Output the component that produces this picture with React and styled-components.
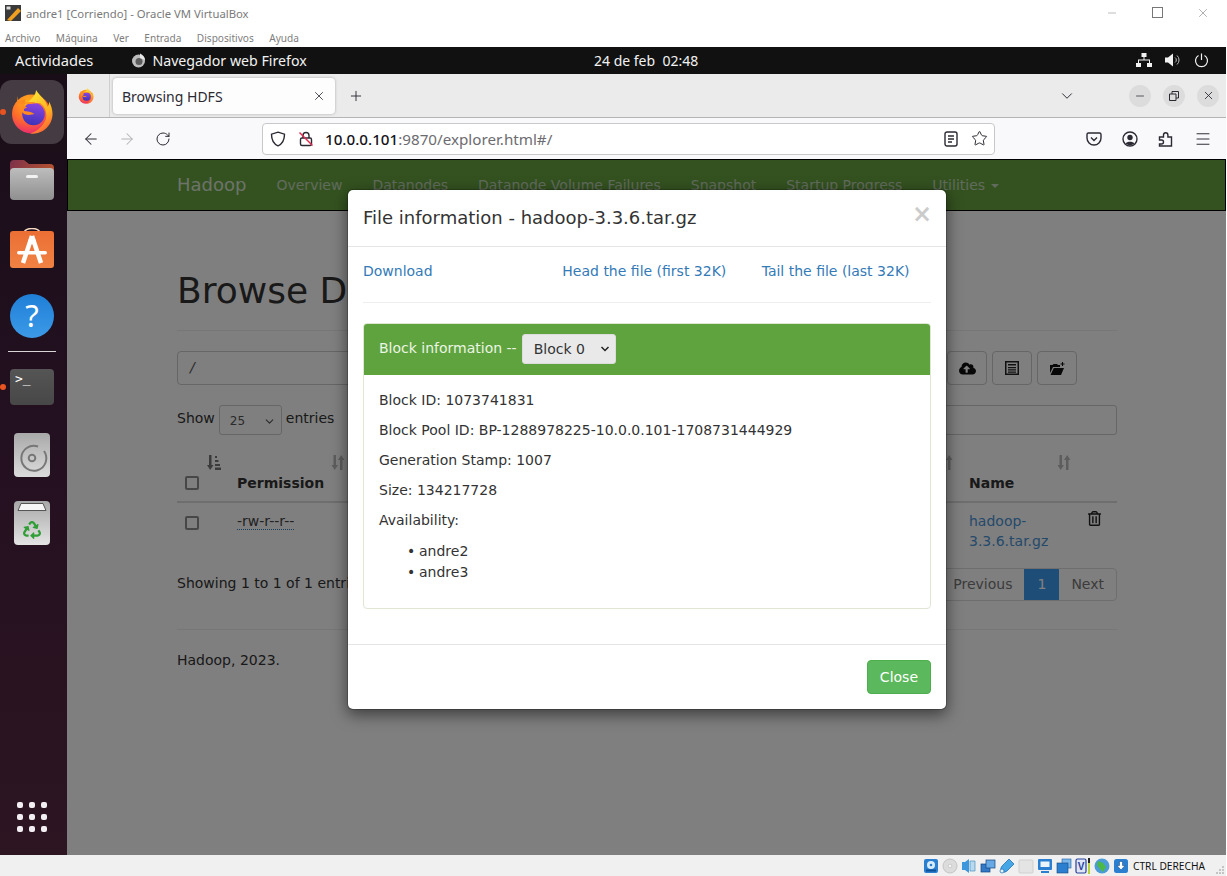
import React from "react";
import styled, { createGlobalStyle } from "styled-components";
import { FaCloudUploadAlt, FaRecycle, FaRegTrashAlt } from "react-icons/fa";
import { ArrowLeft, ArrowRight, ChevronDown, Plus, RotateCw, Star, X, Minus, Menu } from "lucide-react";

const UI_FONT = `"Noto Sans", "Open Sans", sans-serif`;
const WEB_FONT = `"DejaVu Sans", sans-serif`;

const GlobalStyle = createGlobalStyle`
  html, body {
    margin: 0;
    padding: 0;
    background: #fff;
  }
  * {
    box-sizing: border-box;
  }
`;

const Screen = styled.div`
  width: 1227px;
  height: 876px;
  display: flex;
  flex-direction: column;
  overflow: hidden;
  background: #fff;
  font-family: ${UI_FONT};
`;

/* VirtualBox window */
const TitleBar = styled.div`
  height: 25px;
  display: flex;
  align-items: center;
  padding: 0 1px 0 5px;
  gap: 5px;
  font-size: 11.3px;
  color: #7a7a7a;
`;

const TitleText = styled.span`
  padding-top: 2px;
`;

const WinButtons = styled.div`
  margin-left: auto;
  display: flex;
  align-items: center;
  color: #777;
`;

const WinButton = styled.span`
  width: 45.5px;
  display: flex;
  justify-content: center;
`;

const MenuBar = styled.div`
  height: 22px;
  display: flex;
  align-items: center;
  gap: 15.5px;
  padding: 3px 0 0 5px;
  font-size: 10.1px;
  color: #7d7d7d;
`;

const VmArea = styled.div`
  width: 1226px;
  flex: 1;
  min-height: 0;
  display: flex;
  flex-direction: column;
`;

const TopBar = styled.div`
  height: 27px;
  background: #111;
  color: #f2f2f2;
  display: grid;
  grid-template-columns: 579px auto 1fr;
  align-items: center;
  font-size: 14.2px;
  padding: 0 15px 1px;
`;

const TopLeft = styled.div`
  display: flex;
  align-items: center;
  gap: 38px;
`;

const Activities = styled.span`
  font-size: 14.7px;
`;

const AppName = styled.span`
  display: flex;
  align-items: center;
  gap: 6px;
`;

const Clock = styled.span`
  font-size: 14px;
  white-space: pre;
`;

const TopRight = styled.div`
  display: flex;
  justify-content: flex-end;
  align-items: center;
  gap: 13px;
  padding-right: 2px;
`;

const Desktop = styled.div`
  flex: 1;
  min-height: 0;
  display: flex;
`;

/* Ubuntu dock */
const Dock = styled.div`
  width: 67px;
  display: flex;
  flex-direction: column;
  align-items: stretch;
  padding-top: 4px;
  background: linear-gradient(180deg, #190e18 0%, #231020 45%, #2d1522 100%);
`;

const DockSlot = styled.div`
  position: relative;
  width: 64px;
  height: 68px;
  display: flex;
  align-items: center;
  justify-content: center;
  &::before {
    content: "";
    display: ${(p) => (p.$active ? "block" : "none")};
    position: absolute;
    inset: 2px 0;
    border-radius: 12px;
    background: #453c43;
  }
  &::after {
    content: "";
    display: ${(p) => (p.$running ? "block" : "none")};
    position: absolute;
    left: 0;
    top: 31px;
    width: 6px;
    height: 6px;
    border-radius: 50%;
    background: #e95420;
  }
  svg {
    position: relative;
    z-index: 1;
  }
`;

const DockDivider = styled.div`
  height: 1px;
  margin: 1px 11px 1px 8px;
  background: #d8d4d8;
`;

const AppGrid = styled.div`
  margin: auto 0 23px 17px;
  width: 30px;
  display: grid;
  grid-template-columns: repeat(3, 6px);
  gap: 6px;
`;

const AppDot = styled.span`
  width: 6px;
  height: 6px;
  border-radius: 2px;
  background: #f3eef2;
`;

/* Firefox */
const Browser = styled.div`
  flex: 1;
  min-width: 0;
  display: flex;
  flex-direction: column;
`;

const TabStrip = styled.div`
  height: 44px;
  display: flex;
  align-items: center;
  background: #ebebeb;
  border-bottom: 1px solid #b4b4b4;
  color: #2b2a33;
`;

const ViewButton = styled.div`
  width: 43px;
  height: 43px;
  display: flex;
  align-items: center;
  justify-content: center;
  padding-right: 4px;
  border-right: 1px solid #cfcfcf;
`;

const Tab = styled.div`
  width: 222px;
  height: 36px;
  margin-left: 3px;
  padding: 1px 9px 0;
  display: flex;
  align-items: center;
  justify-content: space-between;
  background: #fdfdfd;
  border-radius: 4px;
  box-shadow: 0 0 3px rgba(0, 0, 0, 0.28);
  font-size: 14px;
`;

const NewTab = styled.div`
  margin-left: 13px;
  display: flex;
`;

const StripRight = styled.div`
  margin-left: auto;
  display: flex;
  align-items: center;
  padding-right: 7px;
`;

const CircleButton = styled.span`
  width: 22px;
  height: 22px;
  margin-left: ${(p) => p.$gap || 12}px;
  border-radius: 50%;
  background: #dcdcdc;
  display: flex;
  align-items: center;
  justify-content: center;
`;

const NavBar = styled.div`
  height: 41px;
  display: flex;
  align-items: center;
  background: #f9f9fb;
  color: #2b2a33;
  padding-left: 6px;
`;

const NavButton = styled.span`
  width: 36px;
  display: flex;
  justify-content: center;
  color: ${(p) => (p.$off ? "#b3b3b6" : "#2b2a33")};
`;

const UrlBar = styled.div`
  width: 733px;
  height: 32px;
  margin-left: 81px;
  padding: 0 6px 0 7px;
  display: flex;
  align-items: center;
  gap: 12px;
  background: #fff;
  border: 1px solid #c8c8c8;
  border-radius: 4px;
  font-size: 15.2px;
`;

const UrlText = styled.span`
  margin-left: -1px;
  color: #6c6c70;
  b {
    font-weight: 500;
    color: #15141a;
  }
`;

const UrlIcons = styled.div`
  margin-left: auto;
  display: flex;
  align-items: center;
  gap: 13px;
`;

const NavRight = styled.div`
  margin-left: 91px;
  display: flex;
  align-items: center;
  gap: 20px;
`;

/* Hadoop page */
const Page = styled.div`
  position: relative;
  flex: 1;
  min-height: 0;
  background: #fff;
  color: #333;
  font-family: ${WEB_FONT};
  font-size: 14px;
  line-height: 20px;
  overflow: hidden;
`;

const HadoopNav = styled.div`
  height: 52px;
  padding-left: 109px;
  display: flex;
  align-items: center;
  gap: 30px;
  background: #68a541;
  border: 1px solid #000;
  color: #c3d6ba;
  white-space: nowrap;
`;

const Brand = styled.span`
  font-size: 18px;
  color: #dbe6d5;
`;

const Caret = styled.span`
  display: inline-block;
  margin-left: 6px;
  vertical-align: middle;
  border-top: 4px solid currentColor;
  border-left: 4px solid transparent;
  border-right: 4px solid transparent;
`;

const Container = styled.div`
  width: 940px;
  margin-left: 110px;
`;

const PageHeader = styled.div`
  margin-top: 60px;
  padding-bottom: 19px;
  border-bottom: 1px solid #eee;
`;

const Heading = styled.h1`
  margin: 0;
  font-size: 36px;
  font-weight: 500;
  line-height: 40px;
  color: #333;
`;

const PathRow = styled.div`
  margin-top: 20px;
  padding-right: 40px;
  display: flex;
  gap: 5px;
`;

const PathInput = styled.div`
  flex: 1;
  height: 34px;
  padding: 5px 12px 7px;
  border: 1px solid #ccc;
  border-radius: 4px;
  color: #555;
  font-style: italic;
`;

const IconButton = styled.span`
  width: 40px;
  height: 34px;
  display: flex;
  align-items: center;
  justify-content: center;
  border: 1px solid #ccc;
  border-radius: 4px;
  color: #111;
`;

const FilterRow = styled.div`
  margin-top: 20px;
  display: flex;
  align-items: center;
  justify-content: space-between;
`;

const ShowEntries = styled.div`
  display: flex;
  align-items: center;
  gap: 4px;
`;

const EntriesLabel = styled.span`
  margin-bottom: 4px;
`;

const EntriesSelect = styled.span`
  width: 63px;
  height: 30px;
  padding: 2px 5px 0 10px;
  display: flex;
  align-items: center;
  justify-content: space-between;
  border: 1px solid #ccc;
  border-radius: 3px;
  font-size: 12px;
  color: #555;
`;

const SearchBox = styled.div`
  width: 240px;
  height: 30px;
  border: 1px solid #ccc;
  border-radius: 3px;
`;

const Table = styled.div`
  margin-top: 10px;
  display: grid;
  grid-template-columns: 52px 124px repeat(5, 100px) 108px 118px 38px;
  font-size: 14px;
`;

const HeadCell = styled.div`
  height: 58px;
  padding: 0 8px 8px;
  display: flex;
  flex-direction: column;
  justify-content: flex-end;
  gap: 3px;
  border-bottom: 2px solid #ddd;
  font-weight: 700;
  svg {
    align-self: flex-end;
  }
`;

const HeadLabel = styled.span`
  height: 20px;
`;

const CheckBox = styled.span`
  display: block;
  width: 14px;
  height: 14px;
  margin: ${(p) => (p.$head ? "3px 0 3px 0" : "5px 0 0 0")};
  border: 2px solid #8f8f8f;
  border-radius: 2px;
  background: #fff;
`;

const BodyCell = styled.div`
  padding: 8px;
  height: 56px;
`;

const DottedLink = styled.span`
  color: #444;
  border-bottom: 1px dotted #337ab7;
`;

const FileLink = styled.span`
  color: #4b93d6;
`;

const TableFoot = styled.div`
  margin-top: 9px;
  display: flex;
  align-items: center;
  justify-content: space-between;
`;

const FootInfo = styled.span`
  margin-bottom: 3px;
`;

const Pagination = styled.div`
  display: flex;
  height: 33px;
  border: 1px solid #ddd;
  border-radius: 4px;
  overflow: hidden;
`;

const PageLink = styled.span`
  display: flex;
  align-items: center;
  padding: 0 ${(p) => (p.$current ? 13 : 12)}px 1px;
  background: ${(p) => (p.$current ? "#3c9cf0" : "transparent")};
  color: ${(p) => (p.$current ? "#fff" : "#777")};
`;

const Divider = styled.hr`
  margin: 28px 0 20px;
  border: 0;
  border-top: 1px solid #eee;
`;

/* Modal */
const Backdrop = styled.div`
  position: absolute;
  inset: 0;
  background: rgba(0, 0, 0, 0.5);
  display: flex;
  justify-content: center;
  padding: 30px 0 0 1px;
`;

const Dialog = styled.div`
  width: 600px;
  height: 521px;
  background: #fff;
  border: 1px solid rgba(0, 0, 0, 0.2);
  background-clip: padding-box;
  border-radius: 6px;
  box-shadow: 0 5px 15px rgba(0, 0, 0, 0.5);
`;

const DialogHead = styled.div`
  height: 57px;
  padding: 15px;
  display: flex;
  justify-content: space-between;
  border-bottom: 1px solid #e5e5e5;
`;

const DialogTitle = styled.div`
  font-size: 18px;
  line-height: 26px;
  color: #333;
`;

const CloseMark = styled.span`
  font-size: 24px;
  font-weight: 700;
  line-height: 18px;
  color: #000;
  opacity: 0.2;
  margin-right: -1px;
`;

const DialogBody = styled.div`
  padding: 14px 15px 15px;
`;

const LinkRow = styled.div`
  margin: 0 -15px;
  display: grid;
  grid-template-columns: repeat(3, 1fr);
`;

const ModalLink = styled.span`
  padding: 0 15px;
  color: #337ab7;
`;

const Rule = styled.hr`
  margin: 21px 0 20px;
  border: 0;
  border-top: 1px solid #eee;
`;

const Panel = styled.div`
  margin: 20px 0;
  border: 1px solid #dfe6d4;
  border-radius: 4px;
  overflow: hidden;
`;

const PanelHead = styled.div`
  height: 51px;
  padding: 9px 15px 11px;
  display: flex;
  align-items: center;
  gap: 5px;
  background: #5fa33e;
  color: #ebf5e4;
`;

const PanelLabel = styled.span`
  margin-bottom: 2px;
`;

const BlockSelect = styled.select`
  width: 94px;
  height: 30px;
  padding: 0 6px 0 11px;
  border: 1px solid #dcdcdc;
  border-radius: 3px;
  appearance: none;
  background-color: #e9e9e9;
  background-image: url("data:image/svg+xml,%3Csvg xmlns='http://www.w3.org/2000/svg' width='10' height='6' viewBox='0 0 10 6'%3E%3Cpath d='M1.500 1l3.500 3.500L8.500 1' fill='none' stroke='%23222' stroke-width='1.500'/%3E%3C/svg%3E");
  background-repeat: no-repeat;
  background-position: right 5px center;
  color: #333;
  font-family: ${WEB_FONT};
  font-size: 14px;
`;

const PanelBody = styled.div`
  padding: 15px;
  height: 233px;
  p {
    margin: 0 0 10px;
  }
`;

const HostList = styled.ul`
  margin: 0;
  padding: 1px 0 0 40px;
  list-style: none;
  li {
    line-height: 21px;
  }
  li::before {
    content: "•";
    display: inline-block;
    width: 12px;
    margin-left: -12px;
  }
`;

const DialogFoot = styled.div`
  padding: 15px;
  display: flex;
  justify-content: flex-end;
  border-top: 1px solid #e5e5e5;
`;

const CloseButton = styled.span`
  height: 34px;
  padding: 6px 12px;
  border: 1px solid #4cae4c;
  border-radius: 4px;
  background: #5cb85c;
  color: #fff;
`;

/* VirtualBox status bar */
const StatusBar = styled.div`
  height: 21px;
  display: flex;
  align-items: center;
  justify-content: flex-end;
  gap: 3px;
  padding-right: 1px;
  background: #f0f0f0;
  font-size: 10.2px;
  color: #111;
`;

const HostKey = styled.span`
  margin-left: 1px;
  white-space: nowrap;
`;

const Grip = styled.svg`
  margin: 8px 0 0 7px;
`;

/* Drawn icons */
const FirefoxLogo = ({ size = 44, id = "ff" }) => (
  <svg width={size} height={size} viewBox="0 0 44 44">
    <defs>
      <radialGradient id={`${id}-body`} cx="0.42" cy="0.2" r="0.95">
        <stop offset="0" stopColor="#ffb21a" />
        <stop offset="0.5" stopColor="#ff6a2b" />
        <stop offset="1" stopColor="#e3118c" />
      </radialGradient>
      <linearGradient id={`${id}-flame`} x1="0.3" y1="0" x2="0.7" y2="1">
        <stop offset="0" stopColor="#ffe234" />
        <stop offset="0.6" stopColor="#ffb020" />
        <stop offset="1" stopColor="#ff5a3a" />
      </linearGradient>
      <linearGradient id={`${id}-globe`} x1="0.6" y1="0" x2="0.4" y2="1">
        <stop offset="0" stopColor="#8f45e0" />
        <stop offset="1" stopColor="#3a33b8" />
      </linearGradient>
    </defs>
    <circle cx="21.5" cy="24" r="19.5" fill={`url(#${id}-body)`} />
    <path
      d="M26 0C26 6 20 9 18 13L30 13C37 18 38 27 34 33C31 38 26 42 20 43.5C33 45 43 35 42.5 23C42.3 19 41 15 39 11.5C39.2 14 38.6 15.8 37.4 16.5C36 10 30 6 26 0Z"
      fill={`url(#${id}-flame)`}
    />
    <circle cx="23.5" cy="24" r="11.3" fill={`url(#${id}-globe)`} />
    <path
      d="M7 6C6.7 9 7.3 11 8.5 13C10.5 10.5 13 9 15.7 9.2C14.6 10.6 14.6 12.2 16 13.2C19 15 24 13 27 13.6C22 10.5 16.5 12 13 15C10.6 17.8 11 21.5 13.5 23.5C17 26 22 24.5 24.5 24C21 21.5 17 21.6 14.5 21C13 19.6 14.5 18 17 18C15.5 16 12 14.5 9.8 14C8.2 11.5 7.5 9 7 6Z"
      fill="#ff8a1e"
    />
  </svg>
);

const FolderIcon = () => (
  <svg width="44" height="40" viewBox="0 0 44 40">
    <defs>
      <linearGradient id="folder-tab" x1="0" y1="0" x2="1" y2="0.3">
        <stop offset="0" stopColor="#7c2f4b" />
        <stop offset="1" stopColor="#b5532f" />
      </linearGradient>
      <linearGradient id="folder-body" x1="0" y1="0" x2="0" y2="1">
        <stop offset="0" stopColor="#bdbdbd" />
        <stop offset="1" stopColor="#8f8f8f" />
      </linearGradient>
    </defs>
    <path d="M0 4a4 4 0 0 1 4-4h10l5 4h21a4 4 0 0 1 4 4v14H0z" fill="url(#folder-tab)" />
    <rect y="8" width="44" height="32" rx="4" fill="url(#folder-body)" />
    <rect x="16" y="15" width="12" height="3" rx="1.5" fill="#f2f2f2" />
  </svg>
);

const StoreIcon = () => (
  <svg width="44" height="40" viewBox="0 0 44 40">
    <defs>
      <linearGradient id="store-bg" x1="0" y1="0" x2="0" y2="1">
        <stop offset="0" stopColor="#ec6f34" />
        <stop offset="1" stopColor="#f08243" />
      </linearGradient>
    </defs>
    <path d="M14 5C15 -1 29 -1 30 5" fill="none" stroke="#f6d9c2" strokeWidth="1.5" />
    <rect y="3" width="44" height="37" rx="3" fill="url(#store-bg)" />
    <path d="M22 8L13 35M22 8L31 35M18 14H26" stroke="#fff" strokeWidth="4.500" fill="none" />
    <rect x="7" y="23" width="30" height="3.500" rx="1.700" fill="#fff" />
  </svg>
);

const HelpIcon = () => (
  <svg width="44" height="44" viewBox="0 0 44 44">
    <defs>
      <linearGradient id="help-bg" x1="0" y1="0" x2="0" y2="1">
        <stop offset="0" stopColor="#1f7fd6" />
        <stop offset="1" stopColor="#3c9ae8" />
      </linearGradient>
    </defs>
    <circle cx="22" cy="22" r="22" fill="url(#help-bg)" />
    <text x="22" y="33" textAnchor="middle" fontFamily="Noto Sans, sans-serif" fontSize="31" fill="#fff">?</text>
  </svg>
);

const TerminalIcon = () => (
  <svg width="44" height="36" viewBox="0 0 44 36">
    <defs>
      <linearGradient id="term-bg" x1="0" y1="0" x2="0" y2="1">
        <stop offset="0" stopColor="#555" />
        <stop offset="1" stopColor="#474747" />
      </linearGradient>
    </defs>
    <rect width="44" height="36" rx="4" fill="url(#term-bg)" />
    <text x="5" y="14" fontFamily="DejaVu Sans Mono, monospace" fontSize="13" fill="#fff">&gt;_</text>
  </svg>
);

const DiscIcon = () => (
  <svg width="36" height="44" viewBox="0 0 36 44">
    <defs>
      <linearGradient id="disc-bg" x1="0" y1="0" x2="0" y2="1">
        <stop offset="0" stopColor="#a9a9a9" />
        <stop offset="1" stopColor="#dcdcdc" />
      </linearGradient>
    </defs>
    <rect width="36" height="44" rx="4" fill="url(#disc-bg)" />
    <path d="M30 18A12.500 12.500 0 1 1 24 13.500" fill="none" stroke="#777" strokeWidth="2" />
    <circle cx="18" cy="25" r="3.300" fill="none" stroke="#777" strokeWidth="2" />
  </svg>
);

const TrashTile = () => (
  <svg width="36" height="44" viewBox="0 0 36 44">
    <defs>
      <linearGradient id="trash-bg" x1="0" y1="0" x2="0" y2="1">
        <stop offset="0" stopColor="#a8a8a8" />
        <stop offset="1" stopColor="#e4e4e4" />
      </linearGradient>
    </defs>
    <rect width="36" height="44" rx="4" fill="url(#trash-bg)" />
    <path d="M7 2.500H29L32 9.500H4z" fill="#f7f7f7" stroke="#555" strokeWidth="1" />
    <FaRecycle x="9" y="20" size="18" color="#2f9e36" />
  </svg>
);

const NetworkIcon = () => (
  <svg width="16" height="14" viewBox="0 0 16 14" fill="#f2f2f2">
    <rect x="5.500" y="0" width="5" height="4" />
    <rect x="0" y="10" width="5" height="4" />
    <rect x="11" y="10" width="5" height="4" />
    <path d="M7.500 4h1v2.500h5.500V10h-1V7.500H3V10H2V6.500h5.500z" />
  </svg>
);

const VolumeIcon = () => (
  <svg width="16" height="14" viewBox="0 0 16 14">
    <path d="M0 4.500h3L8 0.500v13L3 9.500H0z" fill="#f2f2f2" />
    <path d="M10 4.500a3 3 0 0 1 0 5M12 2.500a6 6 0 0 1 0 9" fill="none" stroke="#bbb" strokeWidth="1" />
  </svg>
);

const PowerIcon = () => (
  <svg width="15" height="15" viewBox="0 0 15 15" fill="none" stroke="#f2f2f2" strokeWidth="1.200">
    <path d="M4.500 2.500a6 6 0 1 0 6 0M7.500 0.500v6.500" />
  </svg>
);

const ShieldIcon = () => (
  <svg width="16" height="16" viewBox="0 0 16 16" fill="none" stroke="#2b2a33" strokeWidth="1.400">
    <path d="M8 1.200L14.500 3.200C14.500 9 12.500 12.800 8 14.800C3.500 12.800 1.500 9 1.500 3.200z" />
  </svg>
);

const BrokenLockIcon = () => (
  <svg width="16" height="16" viewBox="0 0 16 16" fill="none" stroke="#2b2a33" strokeWidth="1.400">
    <path d="M5 7V4.500a3 3 0 0 1 6 0V7" />
    <rect x="2.500" y="7" width="11" height="7.500" rx="1.500" />
    <path d="M1.500 1.500L14.500 14.500" stroke="#e22850" />
  </svg>
);

const ReaderIcon = () => (
  <svg width="14" height="16" viewBox="0 0 14 16" fill="none" stroke="#2b2a33" strokeWidth="1.400">
    <rect x="1" y="1" width="12" height="14" rx="2" />
    <path d="M4 5h6M4 8h6M4 11h4" />
  </svg>
);

const PocketIcon = () => (
  <svg width="16" height="16" viewBox="0 0 16 16" fill="none" stroke="#2b2a33" strokeWidth="1.400">
    <path d="M2.500 2h11A1.500 1.500 0 0 1 15 3.500V7A7 7 0 0 1 1 7V3.500A1.500 1.500 0 0 1 2.500 2z" />
    <path d="M5 6.500l3 3 3-3" />
  </svg>
);

const AccountIcon = () => (
  <svg width="16" height="16" viewBox="0 0 16 16">
    <circle cx="8" cy="8" r="7" fill="none" stroke="#2b2a33" strokeWidth="1.400" />
    <circle cx="8" cy="6.500" r="2.700" fill="#2b2a33" />
    <path d="M3.500 12.500C5 10 11 10 12.500 12.500A7 7 0 0 1 3.500 12.500z" fill="#2b2a33" />
  </svg>
);

const ExtensionIcon = () => (
  <svg width="16" height="16" viewBox="0 0 16 16" fill="none" stroke="#2b2a33" strokeWidth="1.400">
    <path d="M1.500 6H5.500V4a2.200 2.200 0 0 1 4.400 0V6H13.500V15H1.500V13H3.500a2 2 0 0 0 0-4H1.500z" />
  </svg>
);

const SortBoth = () => (
  <svg width="14" height="15" viewBox="0 0 14 15" fill="#bbb">
    <path d="M2.500 0h2.500v10h2L3.700 15 0.500 10h2zM9 15h2.500V5h2L10.200 0 7 5h2z" />
  </svg>
);

const SortAsc = () => (
  <svg width="14" height="15" viewBox="0 0 14 15" fill="#777">
    <path d="M2 0h2.500v10h2L3.200 15 0 10h2zM8 1h2v2H8zM8 5h3.500v2H8zM8 9h5v2H8zM8 12.500h6V15H8z" />
  </svg>
);

const ListAltIcon = () => (
  <svg width="14" height="14" viewBox="0 0 14 14" fill="#222">
    <path d="M0 0h14v14H0zM1.500 1.500v11h11v-11z" fillRule="evenodd" />
    <path d="M3 3h8v1.500H3zM3 6h8v1.200H3zM3 8.300h8v1.200H3zM3 10.500h8v1.200H3z" />
  </svg>
);

const FolderPlusIcon = () => (
  <svg width="15" height="13" viewBox="0 0 15 13" fill="#111">
    <path d="M0 3h2.500l1 -1H7l1 1h2v2H3L0 11z" />
    <path d="M3.800 6H14L11 13H0.500z" />
    <path d="M12 0h1v1.500h1.500v1H13V4h-1V2.500h-1.500v-1H12z" />
  </svg>
);

/* Small status bar icons, one after the other as in the tray */
const TrayIcon = ({ children }) => (
  <svg width="16" height="16" viewBox="0 0 16 16">{children}</svg>
);

const trayIcons = [
  <>
    <rect x="1" y="1" width="14" height="14" rx="2" fill="#2a7fd0" />
    <circle cx="8" cy="7" r="4" fill="#d8ecfb" />
    <circle cx="8" cy="7" r="1.300" fill="#2a7fd0" />
    <rect x="3" y="11.500" width="10" height="2" fill="#0d4f93" />
  </>,
  <>
    <circle cx="8" cy="8" r="7" fill="#dcdcdc" stroke="#c4c4c4" />
    <circle cx="8" cy="8" r="1.800" fill="#f6f6f6" stroke="#bbb" strokeWidth="0.600" />
  </>,
  <>
    <path d="M1 4h3l4-3v14l-4-3H1z" fill="#3c97dc" />
    <path d="M9 3h5v10H9z" fill="#b9d9ef" stroke="#4d8fbe" strokeWidth="0.700" />
  </>,
  <>
    <rect x="1" y="6" width="9" height="8" fill="#3279c8" stroke="#12457f" strokeWidth="0.700" />
    <rect x="6" y="2" width="9" height="8" fill="#67a9e4" stroke="#12457f" strokeWidth="0.700" />
  </>,
  <>
    <path d="M10 1l5 5-7 7a3 3 0 0 1-5 -5z" fill="#47a6e6" stroke="#1668b0" strokeWidth="0.700" />
    <circle cx="3" cy="13" r="2" fill="#e8f3fb" stroke="#1668b0" strokeWidth="0.700" />
  </>,
  <rect x="1" y="2" width="14" height="13" rx="1" fill="#e4e4e4" stroke="#cfcfcf" />,
  <>
    <rect x="1" y="1" width="14" height="11" rx="1" fill="#2a7fd0" />
    <rect x="3.500" y="3.500" width="9" height="5.500" fill="#eaf4fc" />
    <rect x="4" y="13" width="8" height="2" fill="#2a7fd0" />
  </>,
  <>
    <rect x="6" y="1" width="9" height="9" fill="#7bb6ea" stroke="#1a5fa6" strokeWidth="0.600" />
    <rect x="1" y="5" width="11" height="10" fill="#2a7fd0" stroke="#12457f" strokeWidth="0.600" />
  </>,
  <>
    <rect x="1" y="1" width="10" height="14" rx="1.500" fill="#dfe6f5" stroke="#27409b" strokeWidth="1.200" />
    <text x="6" y="12" textAnchor="middle" fontFamily="Liberation Sans, sans-serif" fontWeight="700" fontSize="10" fill="#27409b">V</text>
    <rect x="13" y="0" width="2" height="16" fill="#222" />
    <rect x="13" y="5" width="2" height="11" fill="#b5d334" />
  </>,
  <>
    <circle cx="8" cy="8" r="7.500" fill="#4a9bd8" />
    <path d="M4 3l5 2 3 4-3 5-3-3-3-4z" fill="#4cb848" />
  </>,
  <>
    <rect x="1" y="1" width="14" height="14" rx="2.500" fill="#2a7fd0" />
    <path d="M6.500 3.500h3v4H12L8 12 4 7.500h2.500z" fill="#fff" stroke="#0d3f7a" strokeWidth="0.500" />
  </>,
];

const App = () => (
  <Screen>
    <GlobalStyle />
    <TitleBar>
      <svg width="16" height="16" viewBox="0 0 16 16">
        <rect width="16" height="16" fill="#3a3a3a" />
        <rect x="1.500" y="1.500" width="4" height="3" fill="#dcdcdc" />
        <path d="M2 15L13 3l3 3L6 16z" fill="#f0a020" />
      </svg>
      <TitleText>andre1 [Corriendo] - Oracle VM VirtualBox</TitleText>
      <WinButtons>
        <WinButton><Minus size={12} strokeWidth={1} /></WinButton>
        <WinButton>
          <svg width="11" height="11" viewBox="0 0 11 11" fill="none" stroke="#777"><rect x="0.500" y="0.500" width="10" height="10" /></svg>
        </WinButton>
        <WinButton><X size={14} strokeWidth={1} /></WinButton>
      </WinButtons>
    </TitleBar>
    <MenuBar>
      <span>Archivo</span>
      <span>Máquina</span>
      <span>Ver</span>
      <span>Entrada</span>
      <span>Dispositivos</span>
      <span>Ayuda</span>
    </MenuBar>
    <VmArea>
      <TopBar>
        <TopLeft>
          <Activities>Actividades</Activities>
          <AppName>
            <svg width="15" height="15" viewBox="0 0 15 15">
              <circle cx="7.500" cy="8" r="6.500" fill="#bdbdbd" />
              <circle cx="8" cy="8.500" r="3.500" fill="#5c5c5c" />
              <path d="M9 0.500C12 2 14 4 14 7L9 5z" fill="#e8e8e8" />
            </svg>
            Navegador web Firefox
          </AppName>
        </TopLeft>
        <Clock>24 de feb  02:48</Clock>
        <TopRight>
          <NetworkIcon />
          <VolumeIcon />
          <PowerIcon />
        </TopRight>
      </TopBar>
      <Desktop>
        <Dock>
          <DockSlot $active $running><FirefoxLogo id="dock-ff" /></DockSlot>
          <DockSlot><FolderIcon /></DockSlot>
          <DockSlot><StoreIcon /></DockSlot>
          <DockSlot><HelpIcon /></DockSlot>
          <DockDivider />
          <DockSlot $running><TerminalIcon /></DockSlot>
          <DockSlot><DiscIcon /></DockSlot>
          <DockSlot><TrashTile /></DockSlot>
          <AppGrid>
            {Array.from({ length: 9 }, (_, i) => <AppDot key={i} />)}
          </AppGrid>
        </Dock>
        <Browser>
          <TabStrip>
            <ViewButton><FirefoxLogo size={16} id="tab-ff" /></ViewButton>
            <Tab>
              Browsing HDFS
              <X size={14} strokeWidth={1.4} />
            </Tab>
            <NewTab><Plus size={16} strokeWidth={1.4} /></NewTab>
            <StripRight>
              <ChevronDown size={18} strokeWidth={1.3} />
              <CircleButton $gap={53}><Minus size={12} strokeWidth={1.5} /></CircleButton>
              <CircleButton>
                <svg width="10" height="10" viewBox="0 0 10 10" fill="none" stroke="#2b2a33"><path d="M0.500 3h6.500v6.500H0.500zM3 3V0.500h6.500V7H7" /></svg>
              </CircleButton>
              <CircleButton><X size={13} strokeWidth={1.6} /></CircleButton>
            </StripRight>
          </TabStrip>
          <NavBar>
            <NavButton><ArrowLeft size={18} strokeWidth={1.4} /></NavButton>
            <NavButton $off><ArrowRight size={18} strokeWidth={1.4} /></NavButton>
            <NavButton><RotateCw size={16} strokeWidth={1.5} /></NavButton>
            <UrlBar>
              <ShieldIcon />
              <BrokenLockIcon />
              <UrlText><b>10.0.0.101</b>:9870/explorer.html#/</UrlText>
              <UrlIcons>
                <ReaderIcon />
                <Star size={17} strokeWidth={1.4} />
              </UrlIcons>
            </UrlBar>
            <NavRight>
              <PocketIcon />
              <AccountIcon />
              <ExtensionIcon />
              <Menu size={18} strokeWidth={1.3} />
            </NavRight>
          </NavBar>
          <Page>
            <HadoopNav>
              <Brand>Hadoop</Brand>
              <span>Overview</span>
              <span>Datanodes</span>
              <span>Datanode Volume Failures</span>
              <span>Snapshot</span>
              <span>Startup Progress</span>
              <span>Utilities<Caret /></span>
            </HadoopNav>
            <Container>
              <PageHeader>
                <Heading>Browse Directory</Heading>
              </PageHeader>
              <PathRow>
                <PathInput>/</PathInput>
                <IconButton><FaCloudUploadAlt size={17} /></IconButton>
                <IconButton><ListAltIcon /></IconButton>
                <IconButton><FolderPlusIcon /></IconButton>
              </PathRow>
              <FilterRow>
                <ShowEntries>
                  <EntriesLabel>Show</EntriesLabel>
                  <EntriesSelect>25 <ChevronDown size={13} strokeWidth={2} /></EntriesSelect>
                  <EntriesLabel>entries</EntriesLabel>
                </ShowEntries>
                <SearchBox />
              </FilterRow>
              <Table>
                <HeadCell><SortAsc /><CheckBox $head /></HeadCell>
                <HeadCell><SortBoth /><HeadLabel>Permission</HeadLabel></HeadCell>
                <HeadCell><SortBoth /><HeadLabel /></HeadCell>
                <HeadCell><SortBoth /><HeadLabel /></HeadCell>
                <HeadCell><SortBoth /><HeadLabel /></HeadCell>
                <HeadCell><SortBoth /><HeadLabel /></HeadCell>
                <HeadCell><SortBoth /><HeadLabel /></HeadCell>
                <HeadCell><SortBoth /><HeadLabel /></HeadCell>
                <HeadCell><SortBoth /><HeadLabel>Name</HeadLabel></HeadCell>
                <HeadCell />
                <BodyCell><CheckBox /></BodyCell>
                <BodyCell><DottedLink>-rw-r--r--</DottedLink></BodyCell>
                <BodyCell />
                <BodyCell />
                <BodyCell />
                <BodyCell />
                <BodyCell />
                <BodyCell />
                <BodyCell><FileLink>hadoop-3.3.6.tar.gz</FileLink></BodyCell>
                <BodyCell><FaRegTrashAlt size={15} color="#222" /></BodyCell>
              </Table>
              <TableFoot>
                <FootInfo>Showing 1 to 1 of 1 entries</FootInfo>
                <Pagination>
                  <PageLink>Previous</PageLink>
                  <PageLink $current>1</PageLink>
                  <PageLink>Next</PageLink>
                </Pagination>
              </TableFoot>
              <Divider />
              <span>Hadoop, 2023.</span>
            </Container>
            <Backdrop>
              <Dialog>
                <DialogHead>
                  <DialogTitle>File information - hadoop-3.3.6.tar.gz</DialogTitle>
                  <CloseMark>×</CloseMark>
                </DialogHead>
                <DialogBody>
                  <LinkRow>
                    <ModalLink>Download</ModalLink>
                    <ModalLink>Head the file (first 32K)</ModalLink>
                    <ModalLink>Tail the file (last 32K)</ModalLink>
                  </LinkRow>
                  <Rule />
                  <Panel>
                    <PanelHead>
                      <PanelLabel>Block information --</PanelLabel>
                      <BlockSelect defaultValue="0">
                        <option value="0">Block 0</option>
                      </BlockSelect>
                    </PanelHead>
                    <PanelBody>
                      <p>Block ID: 1073741831</p>
                      <p>Block Pool ID: BP-1288978225-10.0.0.101-1708731444929</p>
                      <p>Generation Stamp: 1007</p>
                      <p>Size: 134217728</p>
                      <p>Availability:</p>
                      <HostList>
                        <li>andre2</li>
                        <li>andre3</li>
                      </HostList>
                    </PanelBody>
                  </Panel>
                </DialogBody>
                <DialogFoot>
                  <CloseButton>Close</CloseButton>
                </DialogFoot>
              </Dialog>
            </Backdrop>
          </Page>
        </Browser>
      </Desktop>
      <StatusBar>
        {trayIcons.map((icon, i) => <TrayIcon key={i}>{icon}</TrayIcon>)}
        <HostKey>CTRL DERECHA</HostKey>
        <Grip width="10" height="10" viewBox="0 0 10 10" fill="#c4c4c4">
          <rect x="7" y="1" width="2" height="2" />
          <rect x="4" y="4" width="2" height="2" />
          <rect x="7" y="4" width="2" height="2" />
          <rect x="1" y="7" width="2" height="2" />
          <rect x="4" y="7" width="2" height="2" />
          <rect x="7" y="7" width="2" height="2" />
        </Grip>
      </StatusBar>
    </VmArea>
  </Screen>
);

export default App;
